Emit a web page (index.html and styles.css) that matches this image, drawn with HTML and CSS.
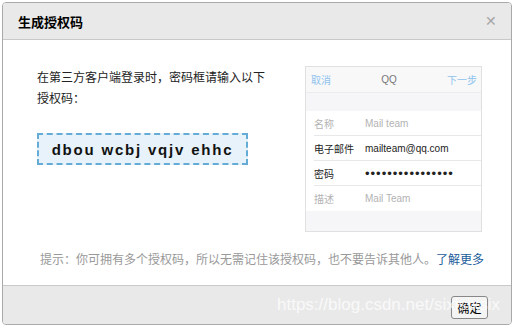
FILE: index.html
```html
<!DOCTYPE html>
<html lang="zh-CN">
<head>
    <meta charset="UTF-8">
    <title>生成授权码</title>
    <link rel="stylesheet" href="styles.css">
</head>
<body>
    <!-- Dialog -->
    <div class="dialog">
        <div class="dialog-header">
            <h3>生成授权码</h3>
            <span class="close">&#x2715;</span>
        </div>
        <div class="dialog-body">
            <div class="main-row">
                <div class="intro">
                    <p class="tip-text">在第三方客户端登录时，密码框请输入以下授权码：</p>
                    <div class="auth-code">dbou wcbj vqjv ehhc</div>
                </div>
                <!-- phone preview -->
                <div class="phone">
                    <div class="phone-bar">
                        <span class="bar-link">取消</span>
                        <span class="bar-title">QQ</span>
                        <span class="bar-link">下一步</span>
                    </div>
                    <div class="phone-gap"></div>
                    <div class="phone-list">
                        <div class="phone-row muted"><span class="label">名称</span><span>Mail team</span></div>
                        <div class="phone-row"><span class="label">电子邮件</span><span>mailteam@qq.com</span></div>
                        <div class="phone-row"><span class="label">密码</span><span class="dots">&#8226;&#8226;&#8226;&#8226;&#8226;&#8226;&#8226;&#8226;&#8226;&#8226;&#8226;&#8226;&#8226;&#8226;&#8226;&#8226;</span></div>
                        <div class="phone-row muted last"><span class="label">描述</span><span>Mail Team</span></div>
                    </div>
                    <div class="phone-foot"></div>
                </div>
            </div>
            <p class="hint">提示：你可拥有多个授权码，所以无需记住该授权码，也不要告诉其他人。<a href="#">了解更多</a></p>
        </div>
        <div class="dialog-footer">
            <button class="ok-btn">确定</button>
        </div>
        <span class="watermark">https://blog.csdn.net/sixisixsix</span>
    </div>
</body>
</html>
```

FILE: styles.css
```css
* {
    margin: 0;
    padding: 0;
    box-sizing: border-box;
}

body {
    font-family: "Liberation Sans", "Noto Sans CJK SC", sans-serif;
    background-color: #fff;
    padding: 2px;
    font-size: 12px;
    color: #000;
}

.dialog {
    position: relative;
    width: 510px;
    border: 1px solid #a9a9a9;
    border-radius: 4px;
    overflow: hidden;
}

.dialog-header {
    height: 37px;
    background-color: #e9e9e9;
    border-bottom: 1px solid #c9c9c9;
    display: flex;
    align-items: center;
    justify-content: space-between;
    padding: 0 14px 0 15px;
}

.dialog-header h3 {
    font-size: 13px;
    font-weight: bold;
    color: #000;
}

.close {
    color: #a6a6a6;
    font-size: 14px;
}

.dialog-body {
    background-color: #fff;
    padding: 26px 29px 16px 34px;
}

.main-row {
    display: flex;
    justify-content: space-between;
}

.intro {
    width: 232px;
}

.tip-text {
    font-size: 12px;
    line-height: 21px;
    color: #222;
    margin-top: 2px;
}

.auth-code {
    margin-top: 23px;
    width: 211px;
    height: 32px;
    border: 2px dashed #64acd6;
    background-color: #e7f2fa;
    font-weight: bold;
    font-size: 15px;
    letter-spacing: 1.8px;
    color: #111;
    display: flex;
    align-items: center;
    justify-content: center;
}

/* phone screenshot */
.phone {
    width: 177px;
    border: 1px solid #e0e0e0;
    background-color: #f6f6f8;
    font-size: 10px;
}

.phone-bar {
    height: 26px;
    display: flex;
    justify-content: space-between;
    align-items: center;
    padding: 0 4px 0 5px;
    background-color: #f8f8f9;
    border-bottom: 1px solid #ececec;
    color: #777;
}

.bar-link {
    color: #8fc3ee;
}

.phone-gap {
    height: 18px;
}

.phone-list {
    background-color: #fff;
    padding-left: 8px;
}

.phone-row {
    height: 25px;
    display: flex;
    align-items: center;
    border-bottom: 1px solid #e8e8e8;
    color: #222;
}

.phone-row.last {
    border-bottom: none;
}

.phone-row .label {
    width: 51px;
}

.phone-row.muted {
    color: #b3b3b3;
}

.dots {
    font-size: 13px;
    letter-spacing: 1px;
}

.phone-foot {
    height: 20px;
}

.hint {
    margin-top: 19px;
    color: #999;
    font-size: 12px;
    line-height: 18px;
    margin-left: 3px;
    white-space: nowrap;
}

.hint a {
    color: #1b5c9a;
    text-decoration: none;
}

.dialog-footer {
    height: 39px;
    background-color: #e9e9e9;
    border-top: 1px solid #c9c9c9;
    display: flex;
    align-items: center;
    justify-content: flex-end;
    padding-right: 23px;
}

.ok-btn {
    width: 37px;
    height: 23px;
    font-family: inherit;
    font-size: 12px;
    color: #000;
    background-color: #f4f4f4;
    border: 1px solid #888;
    border-radius: 3px;
    margin-top: 4px;
}

.watermark {
    position: absolute;
    left: 274px;
    bottom: 9px;
    font-size: 17px;
    color: rgba(255, 255, 255, 0.75);
    pointer-events: none;
}
```
